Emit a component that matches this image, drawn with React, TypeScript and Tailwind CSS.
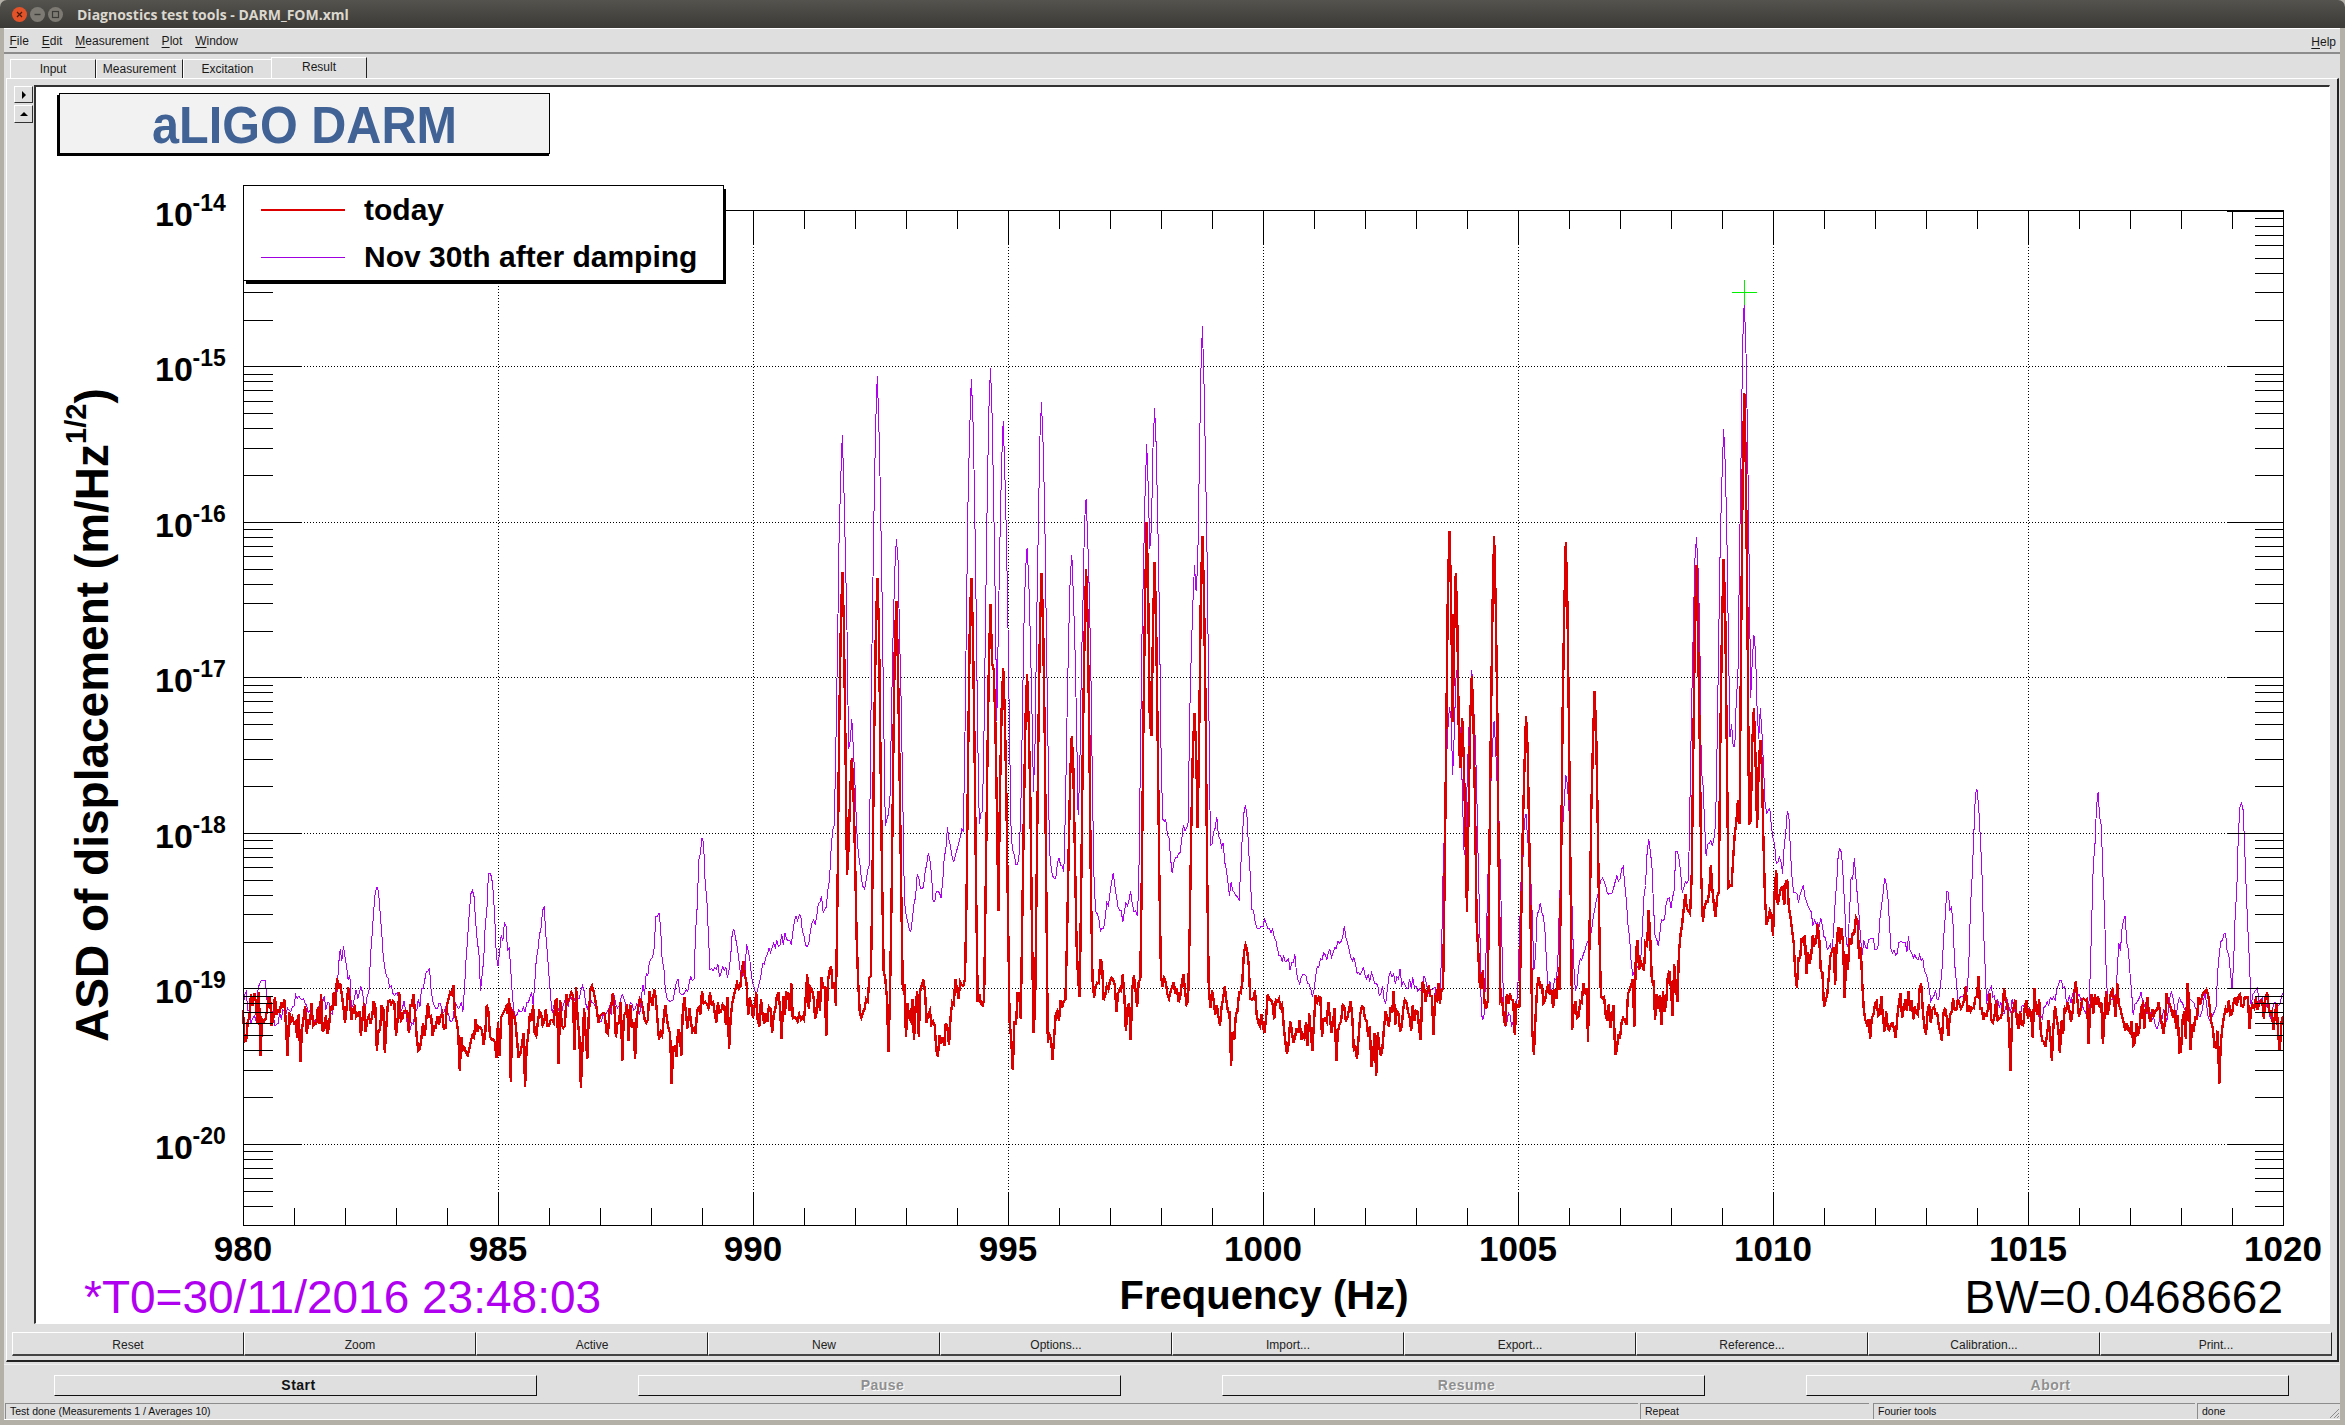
import React from "react";

const BIN = 0.03125;
const N = 1280;
const PX = 51 * BIN;
const X0 = 243;
const X1 = 2283;
const Y0 = 210.9;
const DEC = 155.5;
const YB = 1225;
const fx = (f: number) => X0 + (f - 980) * 51;
const ly = (l: number) => Y0 + (-14 - l) * DEC;

type P = [number, number];

const rng = (seed: number) => () => {
  seed |= 0;
  seed = (seed + 0x6d2b79f5) | 0;
  let t = Math.imul(seed ^ (seed >>> 15), 1 | seed);
  t = (t + Math.imul(t ^ (t >>> 7), 61 | t)) ^ t;
  return ((t ^ (t >>> 14)) >>> 0) / 4294967296;
};

const interp = (pts: P[], f: number) => {
  if (f <= pts[0][0]) return pts[0][1];
  for (let i = 1; i < pts.length; i++) {
    if (f <= pts[i][0]) {
      const [a, b] = pts[i - 1];
      const [c, d] = pts[i];
      return b + ((d - b) * (f - a)) / (c - a);
    }
  }
  return pts[pts.length - 1][1];
};

const gen = (
  seed: number,
  base: P[],
  peaks: P[],
  wd: number,
  sd: number,
  ar: number,
  dip: number,
) => {
  const r = rng(seed);
  const out: number[] = [];
  let n = 0;
  const centres = peaks.map(([f, t]) => [Math.round((f - 980) / BIN), t]);
  for (let i = 0; i <= N; i++) {
    const f = 980 + i * BIN;
    n = ar * n + (r() + r() + r() - 1.5) * sd * 1.6;
    let b = interp(base, f) + n;
    if (r() < dip) b -= 0.12 + r() * 0.24;
    let v = Math.pow(10, b);
    for (const [c, t] of centres) {
      const d = Math.abs(i - c);
      if (d > 14) continue;
      const h = t + 19.2;
      const p = t - h * Math.pow(d / wd, 1.5) + (d === 0 ? 0 : (r() - 0.5) * 0.16);
      if (p > -21) v = Math.max(v, Math.pow(10, p));
    }
    out.push(Math.log10(v));
  }
  for (const [c, t] of centres) out[c] = t;
  return out;
};

const linePath = (vals: number[]) =>
  vals
    .map((v, i) => `${i === 0 ? "M" : "L"}${(X0 + i * PX).toFixed(1)} ${ly(v).toFixed(1)}`)
    .join("");

const purpleBase: P[] = [
  [980, -19.1], [981, -19.12], [982.2, -19.12], [983.2, -19.12], [984, -19.15], [985.5, -19.12], [987, -19.12],
  [988.6, -19.1], [989.3, -18.95], [990, -18.95], [990.5, -18.8], [990.92, -18.53],
  [991.06, -18.76], [991.18, -18.55], [991.44, -18.41], [991.57, -17.9], [991.64, -18.02], [991.87, -18.12],
  [992.04, -18.08], [992.16, -18.31], [992.65, -17.95], [993.01, -18.61], [993.11, -18.63], [993.24, -18.27],
  [993.34, -18.46], [993.44, -18.08], [993.53, -18.36], [993.67, -18.41], [993.81, -17.99], [993.96, -18.2],
  [994.09, -18.02], [994.42, -17.86], [995.04, -17.86], [995.2, -18.2], [995.46, -17.7], [995.92, -18.35],
  [995.97, -18.22], [996.15, -18.31], [996.38, -18.3], [996.61, -18.28], [996.8, -18.66], [997.06, -18.27],
  [997.16, -18.63], [997.36, -18.38], [997.52, -18.41], [997.65, -18.18], [998.11, -17.99], [998.21, -18.28],
  [998.37, -18.08], [998.44, -17.89], [998.53, -18.02], [999.09, -17.98], [999.35, -18.38], [999.5, -18.37],
  [999.74, -18.48], [1000, -18.55], [1000.4, -18.75], [1000.9, -18.95], [1001.2, -18.9], [1001.6, -18.65],
  [1002, -18.9], [1002.4, -19.05], [1002.69, -18.94], [1003.34, -19.11], [1004.29, -19.17], [1004.84, -19.2],
  [1005.6, -19.08], [1006.15, -18.94], [1006.6, -18.49], [1007.06, -18.29], [1007.26, -18.94], [1007.72, -18.68],
  [1008.05, -18.4], [1008.31, -18.32], [1008.83, -18.07], [1008.93, -17.67], [1009.15, -17.73], [1009.9, -17.9],
  [1010.07, -18.19], [1010.47, -18.35], [1011.05, -18.75], [1011.74, -18.76], [1012.49, -18.7], [1012.7, -18.78],
  [1013.1, -19.0], [1014, -19.08], [1017, -19.1], [1020, -19.12],
];

const purplePeaks: P[] = [
  [980.4, -18.95], [981.97, -18.73], [982.64, -18.35], [982.79, -18.87], [983.6, -18.89], [984.49, -18.37], [984.84, -18.26],
  [985.12, -18.58], [985.87, -18.5], [987.96, -18.83], [988.11, -18.54], [989.0, -18.03], [989.63, -18.62],
  [989.9, -18.76], [990.56, -18.65], [990.93, -18.53],
  [991.75, -15.44], [991.93, -17.27], [992.43, -15.06], [992.8, -16.11], [994.28, -15.08], [994.65, -15.01],
  [994.9, -15.35], [995.38, -16.17], [995.65, -15.23], [996.25, -16.21], [996.53, -15.85], [997.72, -15.5],
  [997.89, -15.27], [998.67, -16.28], [998.81, -14.74], [999.65, -17.82],
  [1001.6, -18.6], [1003.67, -17.19], [1003.8, -16.93], [1004.08, -16.95], [1004.54, -17.28], [1005.17, -17.88],
  [1005.43, -18.45], [1005.94, -17.63], [1007.55, -18.04], [1008.14, -18.12], [1008.49, -16.1], [1008.6, -17.6],
  [1009.03, -15.4], [1009.2, -17.3], [1009.3, -17.0], [1009.45, -14.58], [1009.63, -16.73], [1009.75, -17.2],
  [1010.27, -17.86], [1011.3, -18.1], [1011.6, -18.16], [1012.2, -18.29], [1013.43, -18.38], [1013.99, -17.72],
  [1016.39, -17.74], [1016.86, -18.56], [1018.83, -18.65], [1019.2, -17.81],
];

const redBase: P[] = [
  [980, -19.17], [985, -19.17], [990, -19.17], [991, -19.08], [991.3, -19.0], [993.2, -19.08], [993.6, -19.3],
  [994.1, -19.03], [995, -19.2], [995.3, -19.0], [995.92, -19.3], [996.1, -19.03], [996.8, -18.98], [998, -18.98],
  [998.3, -19.03], [999.1, -19.08], [1000, -19.2], [1002, -19.22], [1002.69, -19.25], [1003.34, -18.98],
  [1004.19, -19.0], [1004.78, -19.08], [1005.04, -19.25], [1005.43, -19.08], [1006.15, -19.06], [1006.74, -19.16],
  [1006.93, -19.35], [1007.26, -18.98], [1007.56, -18.57], [1007.69, -18.98], [1007.91, -19.08], [1008.24, -18.52],
  [1008.7, -18.55], [1008.89, -18.38], [1009.12, -18.32], [1009.25, -17.93], [1009.32, -17.86], [1009.75, -18.39],
  [1009.95, -18.39], [1010.24, -18.35], [1010.5, -18.81], [1010.8, -18.75], [1011, -19.0], [1011.31, -18.65],
  [1011.44, -18.9], [1011.64, -18.49], [1011.84, -19.18], [1013, -19.12], [1020, -19.2],
];

const redPeaks: P[] = [
  [991.75, -16.32], [991.93, -17.52], [992.43, -16.36], [992.8, -16.51], [994.28, -16.36], [994.65, -16.53],
  [994.72, -16.95], [994.9, -16.94], [995.38, -16.98], [995.65, -16.33], [996.25, -17.38], [996.53, -16.3],
  [997.72, -16.0], [997.89, -16.26], [998.67, -17.23], [998.81, -16.09], [999.65, -18.72],
  [1003.65, -16.06], [1003.79, -16.33], [1003.91, -17.26], [1004.08, -16.99], [1004.54, -16.09], [1005.17, -17.25],
  [1005.94, -16.13], [1006.49, -17.09], [1008.49, -16.28], [1009.03, -16.24], [1009.44, -15.17], [1009.63, -17.2],
  [1009.75, -17.4],
];

const purple = gen(77, purpleBase, purplePeaks, 6, 0.05, 0.7, 0);
const red = gen(1234, redBase, redPeaks, 3.8, 0.1, 0.55, 0.07);

const axisTicks = () => {
  let d = "";
  for (let i = 1; i < 40; i++) {
    const x = Math.round(fx(980 + i)) + 0.5;
    const len = i % 5 === 0 ? 33 : 18;
    d += `M${x} 210.5v${len}M${x} ${YB + 0.5}v${-len}`;
  }
  for (let e = -14; e >= -21; e--) {
    for (let m = 1; m <= 9; m++) {
      const l = e + Math.log10(m);
      if (l > -14 || l < -20.51) continue;
      const y = Math.round(ly(l)) + 0.5;
      const len = m === 1 ? 57 : 29;
      d += `M243.5 ${y}h${len}M2283.5 ${y}h${-len}`;
    }
  }
  return d;
};

const gridPath = () => {
  let d = "";
  for (let i = 5; i < 40; i += 5) {
    const x = Math.round(fx(980 + i)) + 0.5;
    d += `M${x} 210.5V${YB}`;
  }
  for (let e = -15; e >= -20; e--) {
    const y = Math.round(ly(e)) + 0.5;
    d += `M243.5 ${y}H2283`;
  }
  return d;
};

const xLabels = [980, 985, 990, 995, 1000, 1005, 1010, 1015, 1020];
const yLabels = [-14, -15, -16, -17, -18, -19, -20];

function Plot() {
  return (
    <svg width={2293} height={1236} viewBox="36 87 2293 1236" className="block">
      <path d={gridPath()} stroke="#000" strokeWidth={1} strokeDasharray="1 2" shapeRendering="crispEdges" fill="none" />
      <path d={linePath(purple)} stroke="#b000f0" strokeWidth={1} fill="none" shapeRendering="crispEdges" />
      <path d={linePath(red)} stroke="#dc0000" strokeWidth={2.4} fill="none" shapeRendering="crispEdges" />
      <path d={axisTicks()} stroke="#000" strokeWidth={1} fill="none" shapeRendering="crispEdges" />
      <rect x={243.5} y={210.5} width={2040} height={YB - 210} fill="none" stroke="#000" strokeWidth={1} shapeRendering="crispEdges" />
      <path d="M1731.5 292.5h25M1744 280v25" stroke="#00f000" strokeWidth={1} shapeRendering="crispEdges" />

      {/* title pad */}
      <rect x={57} y={95} width={492} height={61} fill="#000" />
      <rect x={59.5} y={93.5} width={490} height={60} fill="#f2f2f2" stroke="#000" strokeWidth={1} shapeRendering="crispEdges" />
      <text x={304.5} y={143} textAnchor="middle" fontSize={51} fontWeight={700} fill="#416295" textLength={305} lengthAdjust="spacingAndGlyphs">
        aLIGO DARM
      </text>

      {/* legend */}
      <rect x={246} y={189} width={480} height={95} fill="#000" />
      <rect x={243.5} y={185.5} width={480} height={95} fill="#fff" stroke="#000" strokeWidth={1} shapeRendering="crispEdges" />
      <path d="M261 209.5h84" stroke="#dc0000" strokeWidth={2} shapeRendering="crispEdges" />
      <path d="M261 257.5h84" stroke="#a000e0" strokeWidth={1} shapeRendering="crispEdges" />
      <text x={364} y={220} fontSize={30} fontWeight={700}>today</text>
      <text x={364} y={267} fontSize={30} fontWeight={700}>Nov 30th after damping</text>

      {/* axis labels */}
      {xLabels.map((v) => (
        <text key={v} x={fx(v)} y={1261} textAnchor="middle" fontSize={35} fontWeight={700}>{v}</text>
      ))}
      {yLabels.map((e) => (
        <g key={e}>
          <text x={155} y={ly(e) + 15} fontSize={34} fontWeight={700}>10</text>
          <text x={192.5} y={ly(e)} fontSize={23} fontWeight={700}>{e}</text>
        </g>
      ))}
      <text x={1264} y={1309} textAnchor="middle" fontSize={40} fontWeight={700}>Frequency (Hz)</text>
      <text x={84} y={1313} fontSize={46} fill="#b000f0">*T0=30/11/2016 23:48:03</text>
      <text x={2283} y={1313} textAnchor="end" fontSize={46}>BW=0.0468662</text>
      <text transform="translate(108 1042) rotate(-90)" fontSize={46} fontWeight={700}>
        ASD of displacement (m/Hz
        <tspan fontSize={29} dy={-22}>1/2</tspan>
        <tspan dy={22}>)</tspan>
      </text>
    </svg>
  );
}

const Mnemonic = ({ a, b }: { a: string; b: string }) => (
  <span className="text-[12px] text-[#1a1a1a]">
    <span className="underline underline-offset-2">{a}</span>
    {b}
  </span>
);

const bottomButtons = ["Reset", "Zoom", "Active", "New", "Options...", "Import...", "Export...", "Reference...", "Calibration...", "Print..."];

function ActionButton({ label, on }: { label: string; on?: boolean }) {
  return (
    <div
      className={
        on
          ? "w-[483px] h-[21px] pl-[6px] flex items-center justify-center bg-[#dfdfdf] border-t border-l border-white border-r border-b border-r-[#111] border-b-[#111] text-[14px] tracking-[0.5px] font-bold text-[#111]"
          : "w-[483px] h-[21px] pl-[6px] flex items-center justify-center bg-[#dfdfdf] border-t border-l border-white border-r border-b border-r-[#111] border-b-[#111] text-[14px] tracking-[0.5px] font-bold text-[#8f8f8f] [text-shadow:1px_1px_0_#ffffff]"
      }
    >
      {label}
    </div>
  );
}

export default function App() {
  return (
    <div className="w-[2345px] h-[1425px] bg-[#b3b0a8] overflow-hidden flex flex-col font-['Liberation_Sans',Arial,sans-serif] text-black">
      {/* title bar */}
      <div className="h-[28px] shrink-0 rounded-t-[7px] bg-gradient-to-b from-[#55534e] to-[#3b3a36] flex items-center pl-[12px]">
        <div className="w-[15px] h-[15px] rounded-full bg-[#e2532a] flex items-center justify-center">
          <svg width="9" height="9" viewBox="0 0 9 9"><path d="M2 2l5 5M7 2l-5 5" stroke="#4a1a0a" strokeWidth="1.2" /></svg>
        </div>
        <div className="ml-[3px] w-[15px] h-[15px] rounded-full bg-[#7c7a73] flex items-center justify-center">
          <svg width="9" height="9" viewBox="0 0 9 9"><path d="M1.5 4.5h6" stroke="#3c3b37" strokeWidth="1.4" /></svg>
        </div>
        <div className="ml-[3px] w-[15px] h-[15px] rounded-full bg-[#7c7a73] flex items-center justify-center">
          <svg width="9" height="9" viewBox="0 0 9 9"><rect x="1.5" y="1.5" width="6" height="6" fill="none" stroke="#3c3b37" strokeWidth="1.2" /></svg>
        </div>
        <span className="ml-[14px] font-['Open_Sans',sans-serif] font-bold text-[14px] text-[#dcd8cf] whitespace-nowrap">
          Diagnostics test tools - DARM_FOM.xml
        </span>
      </div>

      {/* window body */}
      <div className="h-[1392px] shrink-0 ml-[4px] mr-[5px] bg-[#dfdfdf] flex flex-col">
        {/* menu */}
        <div className="h-[24px] shrink-0 pt-px border-t border-white flex items-center pl-[5.5px] pr-[4px] gap-[12.9px]">
          <Mnemonic a="F" b="ile" />
          <Mnemonic a="E" b="dit" />
          <Mnemonic a="M" b="easurement" />
          <Mnemonic a="P" b="lot" />
          <Mnemonic a="W" b="indow" />
          <div className="ml-auto"><Mnemonic a="H" b="elp" /></div>
        </div>
        <div className="h-[2px] shrink-0 bg-[#8c8c8c]" />

        {/* tabs */}
        <div className="h-[24px] shrink-0 flex items-end pl-[6px] text-[12px] text-[#1a1a1a]">
          <div className="w-[86px] h-[19px] flex items-center justify-center border-t border-l border-white border-r border-r-[#222]">Input</div>
          <div className="w-[87px] h-[19px] flex items-center justify-center border-t border-l border-white border-r border-r-[#222]">Measurement</div>
          <div className="w-[88px] h-[19px] flex items-center justify-center border-t border-l border-white">Excitation</div>
          <div className="w-[96px] h-[21px] pb-[3px] flex items-center justify-center border-t border-l border-white border-r border-r-[#222]">Result</div>
        </div>

        {/* tab panel */}
        <div className="h-[1284px] shrink-0 ml-[2px] mr-[1px] border-t border-l border-white border-r-2 border-b-2 border-r-[#222] border-b-[#222] flex flex-col">
          <div className="flex pt-[6px]">
            <div className="w-[27px] pl-[7px] pt-[1px] flex flex-col gap-[2px]">
              <div className="w-[19px] h-[17px] flex items-center justify-center border-t border-l border-white border-r border-b border-r-[#333] border-b-[#333]">
                <svg width="6" height="8" viewBox="0 0 6 8"><path d="M1 0l4 4-4 4z" fill="#000" /></svg>
              </div>
              <div className="w-[19px] h-[18px] flex items-center justify-center border-t border-l border-white border-r border-b border-r-[#333] border-b-[#333]">
                <svg width="8" height="6" viewBox="0 0 8 6"><path d="M0 5l4-4 4 4z" fill="#000" /></svg>
              </div>
            </div>
            <div className="w-[2296px] h-[1239px] border-t-2 border-l-2 border-r border-b border-t-[#333] border-l-[#333] border-r-white border-b-white bg-white">
              <Plot />
            </div>
          </div>
          <div className="flex ml-[5px] mt-[8px]">
            {bottomButtons.map((b) => (
              <div key={b} className="w-[232px] h-[24px] pt-[2px] flex items-center justify-center border-t border-l border-white border-r border-b-2 border-r-[#222] border-b-[#444] text-[12px] text-[#222]">
                {b}
              </div>
            ))}
          </div>
        </div>

        {/* action row */}
        <div className="h-[13px] shrink-0">
          <div className="mt-[2px] h-px bg-[#efefef]" />
        </div>
        <div className="h-[21px] shrink-0 flex pl-[50px] gap-[101px]">
          <ActionButton label="Start" on />
          <ActionButton label="Pause" />
          <ActionButton label="Resume" />
          <ActionButton label="Abort" />
        </div>

        {/* status */}
        <div className="mt-[7px] h-[17px] shrink-0 flex items-stretch gap-[2px] pl-px text-[10.5px] text-[#111] border-b border-white">
          <div className="w-[1633px] flex items-center pl-[4px] border-t border-l border-[#8c8c8c]">Test done (Measurements 1 / Averages 10)</div>
          <div className="w-[229px] flex items-center pl-[4px] border-t border-l border-[#8c8c8c]">Repeat</div>
          <div className="w-[322px] ml-[2px] flex items-center pl-[4px] border-t border-l border-[#8c8c8c]">Fourier tools</div>
          <div className="flex-1 flex items-center pl-[4px] border-t border-l border-[#8c8c8c] relative">
            done
            <svg className="absolute right-0 bottom-0" width="11" height="11" viewBox="0 0 11 11">
              <path d="M10 1L1 10M10 5l-5 5M10 8l-2 2" stroke="#8c8c8c" strokeWidth="1" fill="none" />
            </svg>
          </div>
        </div>
      </div>
    </div>
  );
}
